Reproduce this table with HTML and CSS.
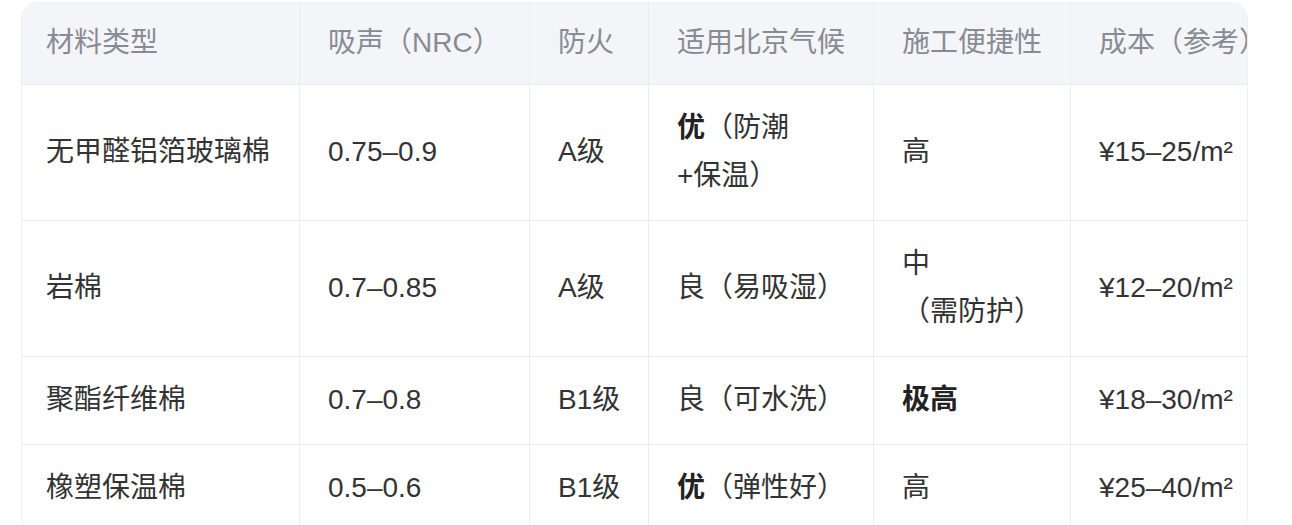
FILE: index.html
```html
<!DOCTYPE html>
<html lang="zh-CN">
<head>
<meta charset="utf-8">
<title>材料对比</title>
<link rel="stylesheet" href="styles.css">
</head>
<body>
<div class="table-wrap">
  <table class="cmp">
    <thead>
      <tr>
        <th class="c1">材料类型</th>
        <th class="c2">吸声（NRC）</th>
        <th class="c3">防火</th>
        <th class="c4">适用北京气候</th>
        <th class="c5">施工便捷性</th>
        <th class="c6">成本（参考）</th>
      </tr>
    </thead>
    <tbody>
      <tr class="r1">
        <td>无甲醛铝箔玻璃棉</td>
        <td>0.75–0.9</td>
        <td>A级</td>
        <td><strong>优</strong>（防潮<br>+保温）</td>
        <td>高</td>
        <td>¥15–25/m²</td>
      </tr>
      <tr class="r2">
        <td>岩棉</td>
        <td>0.7–0.85</td>
        <td>A级</td>
        <td>良（易吸湿）</td>
        <td>中<br>（需防护）</td>
        <td>¥12–20/m²</td>
      </tr>
      <tr>
        <td>聚酯纤维棉</td>
        <td>0.7–0.8</td>
        <td>B1级</td>
        <td>良（可水洗）</td>
        <td><strong>极高</strong></td>
        <td>¥18–30/m²</td>
      </tr>
      <tr class="last">
        <td>橡塑保温棉</td>
        <td>0.5–0.6</td>
        <td>B1级</td>
        <td><strong>优</strong>（弹性好）</td>
        <td>高</td>
        <td>¥25–40/m²</td>
      </tr>
    </tbody>
  </table>
</div>
</body>
</html>
```

FILE: styles.css
```css
html, body {
  margin: 0;
  padding: 0;
  background: #ffffff;
}

body {
  padding: 2px 0 0 21px;
  font-family: "Liberation Sans", "Noto Sans CJK SC", sans-serif;
}

.table-wrap {
  width: 1227px;
  box-sizing: border-box;
  border: 1px solid #f0f0f3;
  border-radius: 16px;
  overflow: hidden;
}

.cmp {
  border-collapse: separate;
  border-spacing: 0;
  table-layout: fixed;
  width: 1273px;
  font-size: 28px;
  line-height: 48px;
  color: #333333;
}

.cmp th,
.cmp td {
  box-sizing: border-box;
  text-align: left;
  vertical-align: middle;
  padding: 19px 28px 20px 28px;
  border-right: 1px solid #ececee;
  border-bottom: 1px solid #ececee;
  white-space: nowrap;
}

.cmp th {
  background: #f4f5f8;
  color: #888b93;
  font-weight: normal;
  padding-top: 16px;
  padding-bottom: 17px;
}

.cmp th:first-child,
.cmp td:first-child {
  padding-left: 24px;
}

.cmp th:last-child,
.cmp td:last-child {
  border-right: none;
}

.cmp tr.last td {
  border-bottom: none;
}

.c1 { width: 278px; }
.c2 { width: 230px; }
.c3 { width: 119px; }
.c4 { width: 225px; }
.c5 { width: 197px; }
.c6 { width: 224px; }

.cmp strong {
  font-weight: bold;
  color: #222222;
}
```
